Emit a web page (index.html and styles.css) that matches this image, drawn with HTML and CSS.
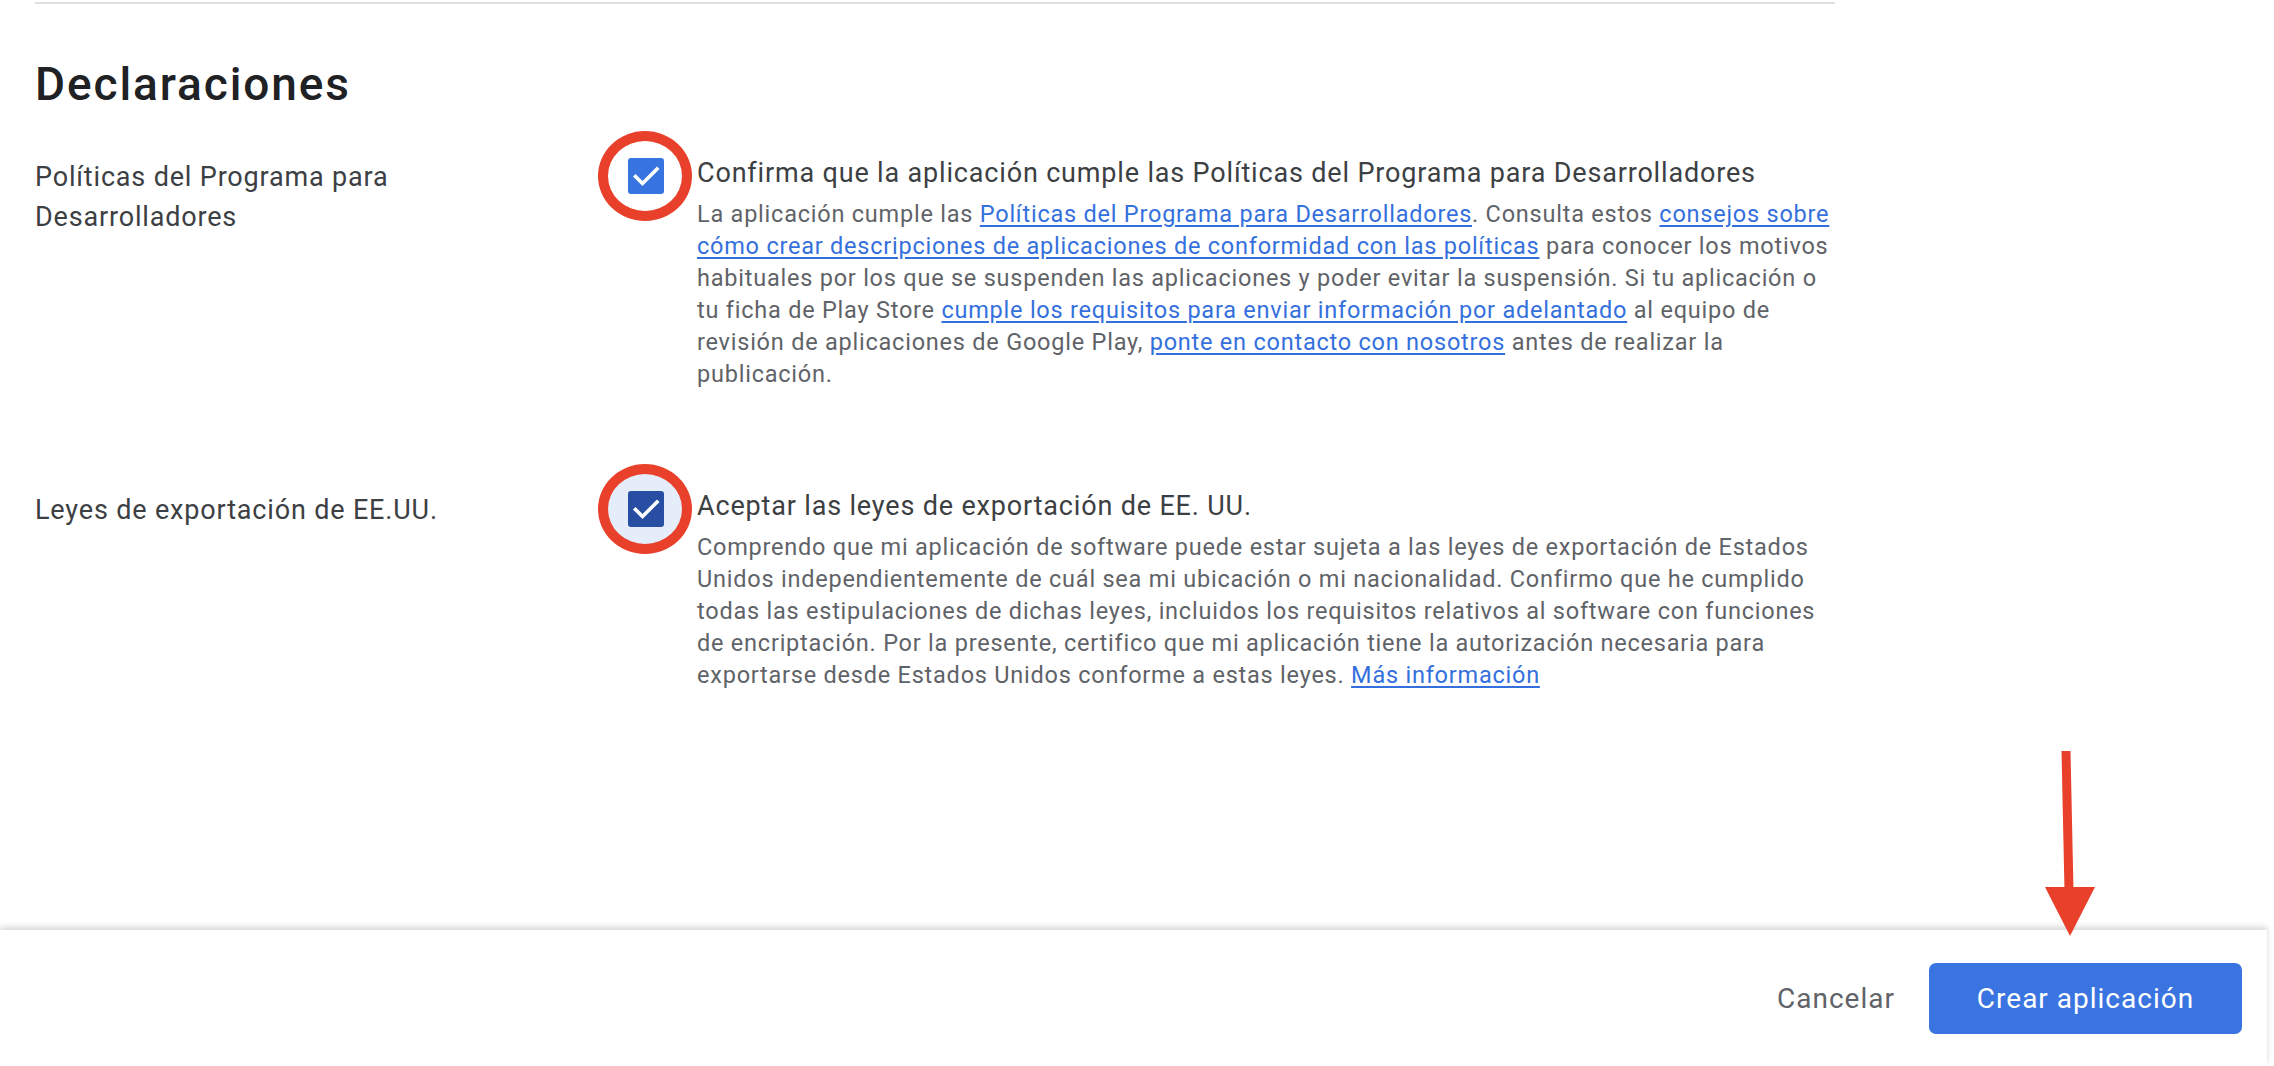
FILE: index.html
```html
<!DOCTYPE html>
<html lang="es">
<head>
<meta charset="utf-8">
<title>Declaraciones</title>
<link rel="stylesheet" href="styles.css">
</head>
<body>
<div class="app">
  <main class="page">
    <div class="rule"></div>
    <h1 class="heading">Declaraciones</h1>

    <section class="decl decl-first">
      <div class="label">Políticas del Programa para Desarrolladores</div>
      <div class="check-cell">
        <span class="ring"></span>
        <span class="box">
          <svg viewBox="0 0 36 36" width="36" height="36" aria-hidden="true"><polyline points="7.5,18.5 14.5,25.5 29,11" fill="none" stroke="#fff" stroke-width="3.6" stroke-linecap="square"/></svg>
        </span>
      </div>
      <div class="text">
        <div class="title">Confirma que la aplicación cumple las Políticas del Programa para Desarrolladores</div>
        <p class="desc">La aplicación cumple las <a href="#">Políticas del Programa para Desarrolladores</a>. Consulta estos <a href="#">consejos sobre cómo crear descripciones de aplicaciones de conformidad con las políticas</a> para conocer los motivos habituales por los que se suspenden las aplicaciones y poder evitar la suspensión. Si tu aplicación o tu ficha de Play Store <a href="#">cumple los requisitos para enviar información por adelantado</a> al equipo de revisión de aplicaciones de Google Play, <a href="#">ponte en contacto con nosotros</a> antes de realizar la publicación.</p>
      </div>
    </section>

    <section class="decl decl-second">
      <div class="label">Leyes de exportación de EE.UU.</div>
      <div class="check-cell">
        <span class="ring ring-focus"></span>
        <span class="box box-dark">
          <svg viewBox="0 0 36 36" width="36" height="36" aria-hidden="true"><polyline points="7.5,18.5 14.5,25.5 29,11" fill="none" stroke="#fff" stroke-width="3.6" stroke-linecap="square"/></svg>
        </span>
      </div>
      <div class="text">
        <div class="title">Aceptar las leyes de exportación de EE. UU.</div>
        <p class="desc">Comprendo que mi aplicación de software puede estar sujeta a las leyes de exportación de Estados Unidos independientemente de cuál sea mi ubicación o mi nacionalidad. Confirmo que he cumplido todas las estipulaciones de dichas leyes, incluidos los requisitos relativos al software con funciones de encriptación. Por la presente, certifico que mi aplicación tiene la autorización necesaria para exportarse desde Estados Unidos conforme a estas leyes. <a href="#">Más información</a></p>
      </div>
    </section>
  </main>

  <footer class="actions">
    <button class="btn-text" type="button">Cancelar</button>
    <button class="btn-primary" type="button">Crear aplicación</button>
  </footer>

  <svg class="arrow" viewBox="0 0 60 195" width="60" height="195" aria-hidden="true">
    <line x1="26" y1="6" x2="29" y2="146" stroke="#e8402a" stroke-width="9"/>
    <polygon points="5,142 55,142 30,191" fill="#e8402a"/>
  </svg>
</div>
</body>
</html>
```

FILE: styles.css
```css
* { box-sizing: border-box; }

html, body {
  margin: 0;
  padding: 0;
  background: #ffffff;
}

body {
  font-family: Roboto, "Liberation Sans", Arial, sans-serif;
  color: #3c4043;
}

.app {
  position: relative;
  height: 1066px;
  display: flex;
  flex-direction: column;
  overflow: hidden;
}

.page {
  flex: 1;
  padding: 2px 0 0 35px;
}

.rule {
  width: 1800px;
  height: 2px;
  background: #e0e0e3;
}

.heading {
  margin: 52px 0 0 0;
  font-family: Roboto, "Liberation Sans", sans-serif;
  font-size: 46px;
  line-height: 56px;
  font-weight: 500;
  letter-spacing: 1.9px;
  color: #202124;
}

.decl {
  display: grid;
  grid-template-columns: 593px 69px 1144px;
  align-items: start;
}

.decl-first { margin-top: 43px; }
.decl-second { margin-top: 98px; }

.label {
  margin-top: 2px;
  max-width: 440px;
  font-size: 27px;
  line-height: 40px;
  letter-spacing: 0.83px;
  color: #3c4043;
}

.check-cell {
  position: relative;
  width: 36px;
  height: 36px;
  margin-top: 3px;
}

.ring {
  position: absolute;
  left: -30px;
  top: -27px;
  width: 94px;
  height: 90px;
  border: 10px solid #e8402a;
  border-radius: 50%;
}

.ring-focus {
  background: #e6edfa;
}

.box {
  position: relative;
  display: block;
  width: 36px;
  height: 36px;
  border-radius: 3px;
  background: #3874df;
}

.box svg { display: block; }

.box-dark { background: #284ea3; }

.title {
  font-size: 27px;
  line-height: 36px;
  letter-spacing: 0.83px;
  color: #3c4043;
}

.desc {
  margin: 7px 0 0 0;
  font-size: 23.5px;
  line-height: 32px;
  letter-spacing: 0.77px;
  color: #5f6368;
}

.desc a {
  color: #3470dd;
  text-decoration: underline;
  text-underline-offset: 3px;
}

.actions {
  height: 136px;
  display: flex;
  align-items: center;
  justify-content: flex-end;
  padding-right: 25px;
  box-shadow: 0 -3px 6px rgba(0, 0, 0, 0.16);
  margin-right: 7px;
  background: #fff;
}

.btn-text {
  margin-right: 10px;
  padding: 0 24px;
  height: 71px;
  border: none;
  background: transparent;
  font-family: Roboto, "Liberation Sans", sans-serif;
  font-size: 28px;
  color: #5f6368;
  letter-spacing: 1px;
}

.btn-primary {
  height: 71px;
  width: 313px;
  border: none;
  border-radius: 7px;
  background: #3a74e0;
  color: #ffffff;
  font-family: Roboto, "Liberation Sans", sans-serif;
  font-size: 28px;
  letter-spacing: 1px;
}

.arrow {
  position: absolute;
  left: 2040px;
  top: 745px;
}
```
